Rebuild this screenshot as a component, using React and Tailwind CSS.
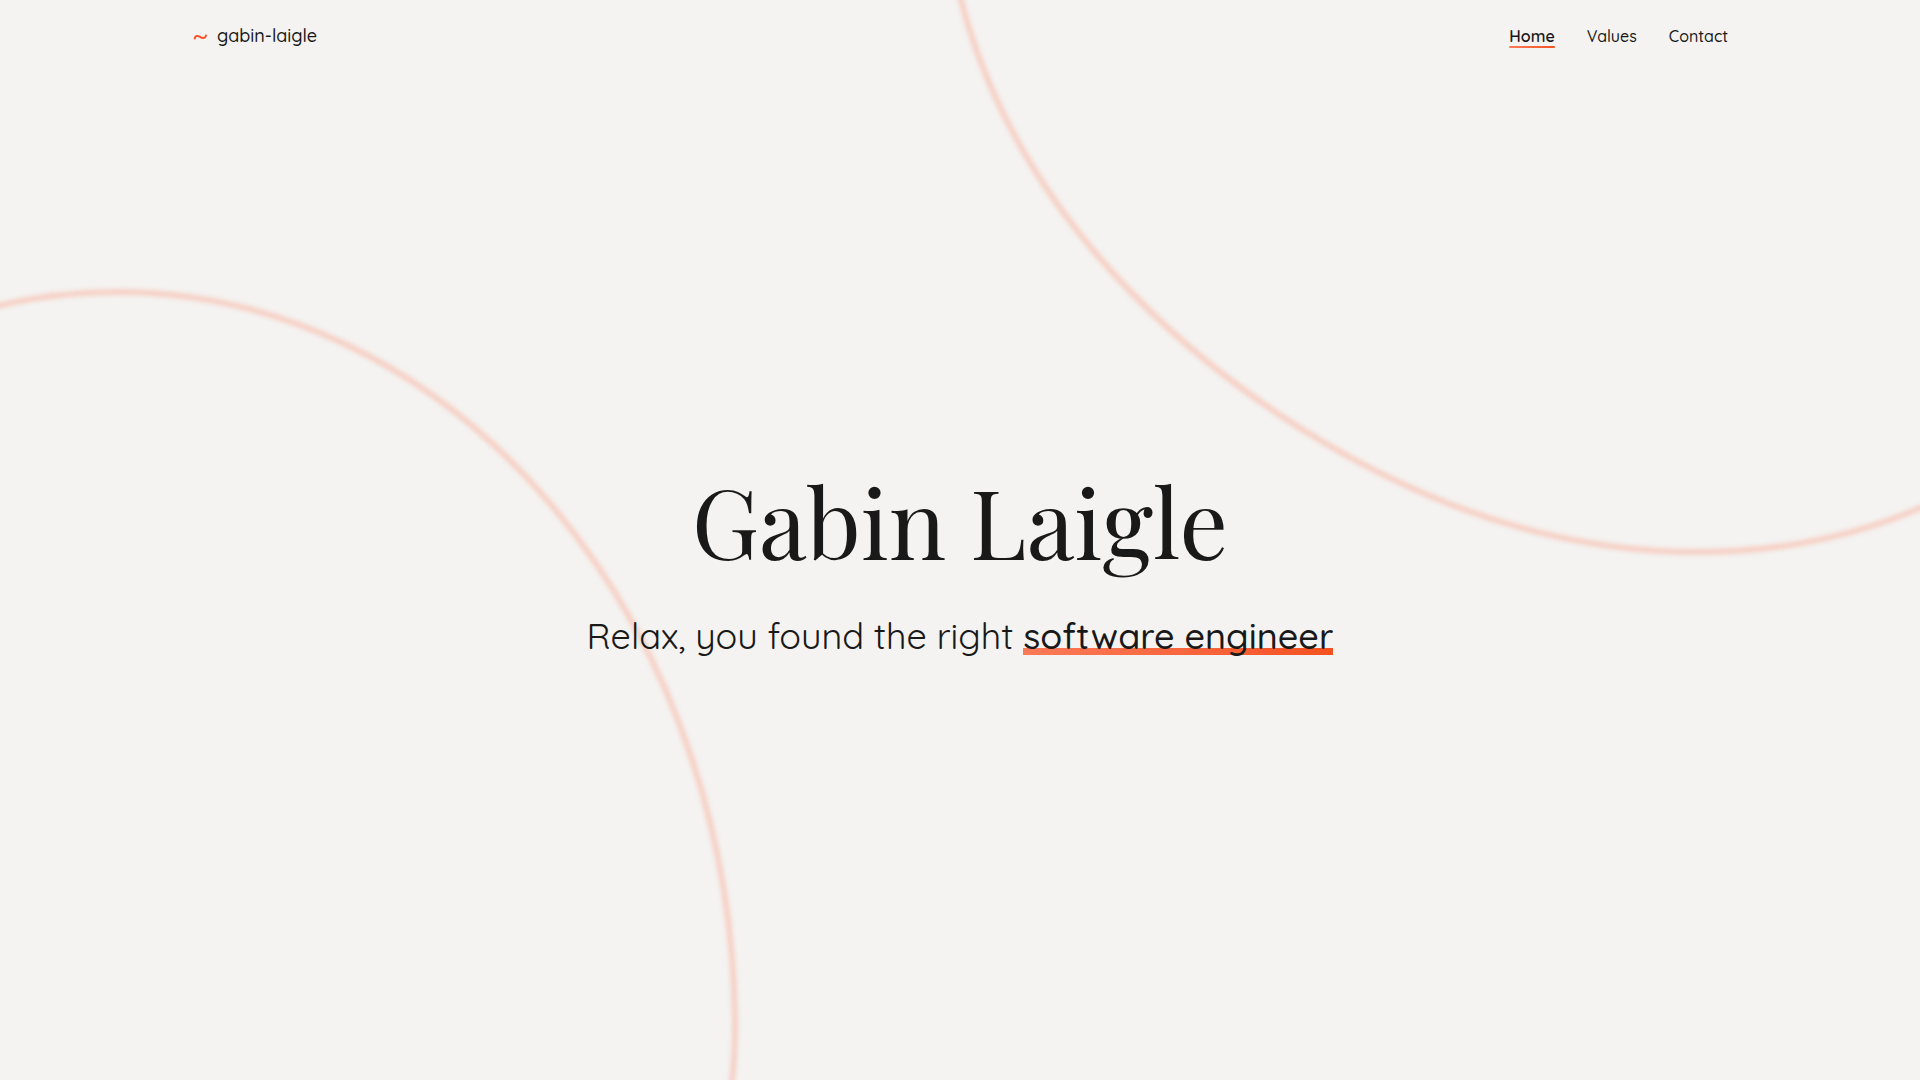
const links = [
  { label: "Home", href: "#home", active: true },
  { label: "Values", href: "#values", active: false },
  { label: "Contact", href: "#contact", active: false },
];

function Background() {
  return (
    <svg
      className="absolute inset-0 h-full w-full"
      viewBox="0 0 1920 1080"
      preserveAspectRatio="none"
      fill="none"
      stroke="#f6d0c5"
      strokeWidth="6"
      aria-hidden="true"
    >
      <g className="blur-[2px]">
        <path d="M-501 1030A618 738 0 0 1 735 1030A618 523 0 0 1 117 1553" />
        <path d="M941 -100Q948 -50 961 0C1019 223 1195 362 1300 428C1410 497 1545 552 1698 552C1778 552 1860 537 1940 499" />
      </g>
    </svg>
  );
}

function Header() {
  return (
    <header className="relative flex items-center justify-between px-[10%] py-6">
      <a href="#home" className="flex items-center gap-2 text-lg leading-6 font-medium">
        <svg className="w-[17px]" viewBox="0 0 17 10" fill="none" stroke="#f9532c" strokeWidth="2" strokeLinecap="round" aria-hidden="true">
          <path d="M2.700 7.500C3.200 4.800 5.500 4.300 8 5.800C10.500 7.400 13.300 7.600 14 4.500" />
        </svg>
        gabin-laigle
      </a>
      <nav className="flex items-center gap-8 text-base leading-6 font-medium">
        {links.map((link) => (
          <a
            key={link.label}
            href={link.href}
            className={link.active ? "relative font-semibold" : "relative"}
          >
            {link.label}
            {link.active && (
              <span className="absolute inset-x-0 bottom-0 h-0.5 rounded-full bg-linear-to-r from-[#fb7a58] to-[#f4511e]" />
            )}
          </a>
        ))}
      </nav>
    </header>
  );
}

export default function App() {
  return (
    <div className="relative flex min-h-screen flex-col overflow-hidden bg-[#f4f3f1] font-[Quicksand,Lato,sans-serif] text-[#191919]">
      <Background />
      <Header />
      <main className="relative flex grow flex-col items-center justify-center gap-7 pb-9 text-center">
        <h1 className="font-['Playfair_Display','Liberation_Serif',serif] text-8xl leading-32">
          Gabin Laigle
        </h1>
        <p className="text-4xl leading-12 font-normal">
          Relax, you found the right{" "}
          <span className="bg-linear-to-r from-[#fb7a58] to-[#f4511e] bg-[length:100%_7px] bg-[position:0_93%] bg-no-repeat font-medium">
            software engineer
          </span>
        </p>
      </main>
    </div>
  );
}
